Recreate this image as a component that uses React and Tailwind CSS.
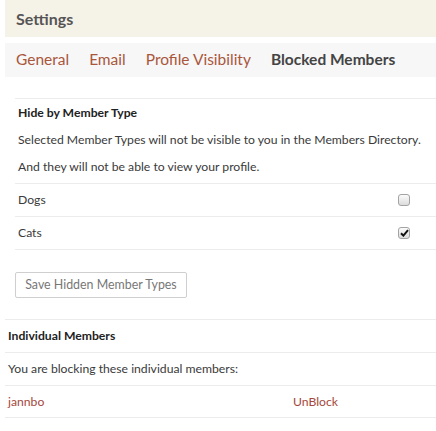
import React from 'react';

const tabs = ['General', 'Email', 'Profile Visibility'];

const memberTypes = [
  { name: 'Dogs', checked: false },
  { name: 'Cats', checked: true },
];

function Checkbox({ checked }) {
  return (
    <div className="w-[12px] h-[12px] rounded-[3px] border border-[#a3a3a3] bg-gradient-to-b from-[#fbfbfb] to-[#dcdcdc] flex items-center justify-center">
      {checked && (
        <svg width="9" height="8" viewBox="0 0 9 8">
          <path d="M1 4.2 L3.4 6.6 L8 1.2" stroke="#111" strokeWidth="2" fill="none" />
        </svg>
      )}
    </div>
  );
}

export default function App() {
  return (
    <div className="w-full min-h-screen bg-white text-[#3a3a3a] font-['Lato',sans-serif]">
      {/* Page header */}
      <div className="ml-[5px] h-[37px] bg-[#f5f2e8] pl-[11px] flex items-center">
        <span className="text-[16px] font-bold text-[#555]">Settings</span>
      </div>

      {/* Sub navigation */}
      <div className="ml-[5px] mt-[6px] h-[34px] bg-[#f7f7f7] pl-[11px] flex items-center gap-[20px] text-[15.5px]">
        {tabs.map(t => (
          <span key={t} className="text-[#a9563b]">{t}</span>
        ))}
        <span className="font-bold text-[#444]">Blocked Members</span>
      </div>

      {/* Hide by member type */}
      <div className="ml-[15px] mt-[21px]">
        <div className="border-t border-[#ececec] pl-[3px] pb-[2px] text-[12.2px]">
          <div className="h-[28px] flex items-center font-bold text-[#222]">Hide by Member Type</div>
          <div className="h-[27px] flex items-center">Selected Member Types will not be visible to you in the Members Directory.</div>
          <div className="h-[27px] flex items-center">And they will not be able to view your profile.</div>
        </div>
        <div className="text-[12.2px]">
          {memberTypes.map(m => (
            <div key={m.name} className="h-[33px] border-t border-[#ececec] pl-[3px] pr-[26px] flex items-center justify-between">
              <span>{m.name}</span>
              <Checkbox checked={m.checked} />
            </div>
          ))}
          <div className="border-t border-[#ececec]" />
        </div>
        <div className="py-[21px]">
          <button className="w-[172px] h-[26px] border border-[#cfcfcf] rounded-[2px] bg-white text-[12.4px] text-[#777]">
            Save Hidden Member Types
          </button>
        </div>
      </div>

      {/* Individual members */}
      <div className="ml-[5px] text-[12.2px]">
        <div className="h-[33px] border-t border-[#ececec] pl-[3px] flex items-center font-bold text-[#222]">Individual Members</div>
        <div className="h-[33px] border-t border-[#ececec] pl-[3px] flex items-center">You are blocking these individual members:</div>
        <div className="h-[33px] border-t border-b border-[#ececec] grid grid-cols-[288px_1fr] items-center">
          <span className="pl-[3px] text-[#a5473c]">jannbo</span>
          <span className="text-[#a5473c]">UnBlock</span>
        </div>
      </div>
    </div>
  );
}
